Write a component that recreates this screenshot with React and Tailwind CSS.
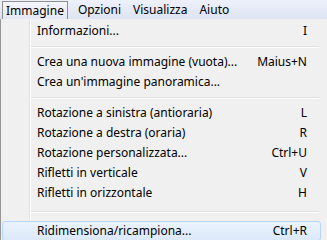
const topMenus = ["Immagine", "Opzioni", "Visualizza", "Aiuto"];

const groups = [
  { gap: "h-[11px]", items: [["Informazioni...", "I"]] },
  {
    gap: "h-[11px]",
    items: [
      ["Crea una nuova immagine (vuota)...", "Maius+N"],
      ["Crea un'immagine panoramica...", ""],
    ],
  },
  {
    gap: "h-[11px]",
    items: [
      ["Rotazione a sinistra (antioraria)", "L"],
      ["Rotazione a destra (oraria)", "R"],
      ["Rotazione personalizzata...", "Ctrl+U"],
      ["Rifletti in verticale", "V"],
      ["Rifletti in orizzontale", "H"],
    ],
  },
  { gap: "h-[18px]", items: [["Ridimensiona/ricampiona...", "Ctrl+R", true]] },
];

function Item({ label, shortcut, active }) {
  return (
    <div
      className={`mx-[1px] flex h-5 items-center rounded-[3px] border pl-[34px] pr-[13px] ${
        active ? "border-[#b8d6fb] bg-gradient-to-b from-[#eaf3fd] to-[#dce9f9]" : "border-transparent"
      }`}
    >
      <span className="flex-1">{label}</span>
      <span>{shortcut}</span>
    </div>
  );
}

function Separator({ h }) {
  return (
    <div className={`flex items-center pl-[30px] pr-[3px] ${h}`}>
      <div className="w-full border-t border-b border-t-[#e0e0e0] border-b-white" />
    </div>
  );
}

export default function App() {
  return (
    <div
      className="h-[240px] w-[327px] overflow-hidden bg-[#f0f0f0] text-[12px] text-black"
      style={{ fontFamily: '"Noto Sans", "Open Sans", sans-serif' }}
    >
      <div className="flex h-[19px] items-stretch bg-gradient-to-b from-[#eef1fa] to-[#dde3f2] pl-[2px]">
        {topMenus.map((m, i) => (
          <div
            key={m}
            className={`flex items-center leading-none ${
              i === 0
                ? "mr-[4px] mt-[1px] border border-b-0 border-[#8e8f8f] bg-gradient-to-b from-[#f4f6fc] to-[#e4e8f4] px-[3px]"
                : "px-[6px]"
            }`}
          >
            {m}
          </div>
        ))}
      </div>
      <div className="relative w-[322px] border-l border-[#979797] bg-[#f0f0f0] pt-[2px]">
        <div className="absolute bottom-0 left-[28px] top-0 w-[2px] border-l border-r border-l-[#e2e3e3] border-r-white" />
        <div className="relative">
          {groups.map((g, gi) => (
            <div key={gi}>
              {gi > 0 && <Separator h={g.gap} />}
              {g.items.map(([l, s, a]) => (
                <Item key={l} label={l} shortcut={s} active={a} />
              ))}
            </div>
          ))}
        </div>
      </div>
    </div>
  );
}
